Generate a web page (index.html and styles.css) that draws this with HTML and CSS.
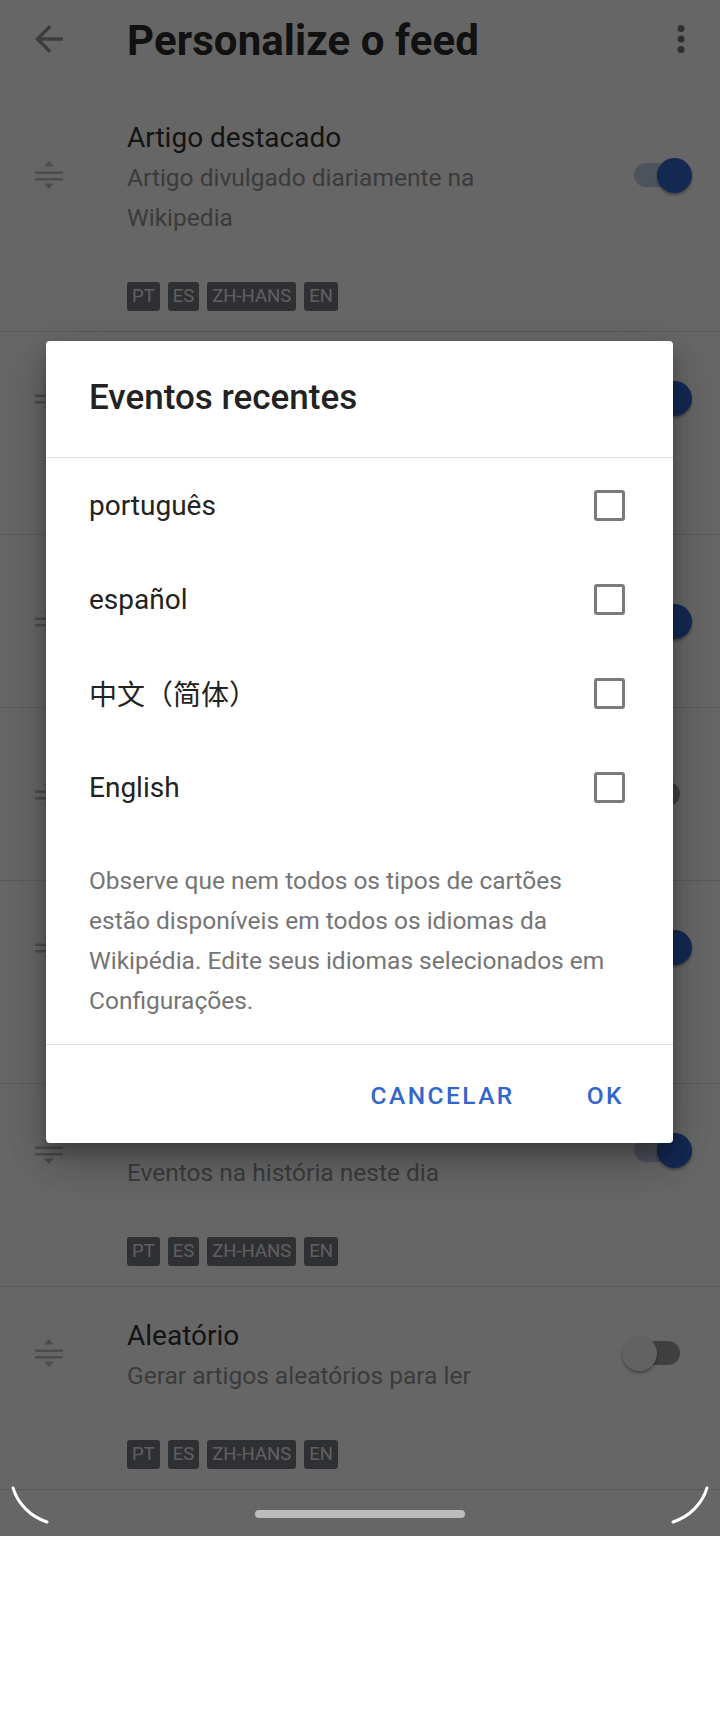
FILE: index.html
```html
<!DOCTYPE html>
<html lang="pt">
<head>
<meta charset="utf-8">
<title>Personalize o feed</title>
<link rel="stylesheet" href="styles.css">
</head>
<body>
<div class="screen">
  <header class="toolbar">
    <span class="icon-btn back" aria-label="Voltar">
      <svg viewBox="0 0 24 24"><path d="M20 11H7.83l5.59-5.59L12 4l-8 8 8 8 1.41-1.41L7.83 13H20v-2z"/></svg>
    </span>
    <h1 class="toolbar-title">Personalize o feed</h1>
    <span class="icon-btn more" aria-label="Mais opções">
      <svg viewBox="0 0 24 24"><circle cx="12" cy="6" r="2"/><circle cx="12" cy="12" r="2"/><circle cx="12" cy="18" r="2"/></svg>
    </span>
  </header>

  <ul class="feed-list">
    <li class="feed-item">
      <div class="feed-row">
        <svg class="drag" viewBox="0 0 28 28"><path d="M14 0l5 5.5H9z M0 10.5h28V13H0z M0 17h28v2.5H0z M9 22.5h10L14 28z"/></svg>
        <div class="feed-text">
          <div class="feed-title">Artigo destacado</div>
          <div class="feed-sub">Artigo divulgado diariamente na Wikipedia</div>
        </div>
        <span class="switch on"></span>
      </div>
      <div class="tags"><span class="tag">PT</span><span class="tag">ES</span><span class="tag">ZH-HANS</span><span class="tag">EN</span></div>
    </li>
    <li class="feed-item">
      <div class="feed-row">
        <svg class="drag" viewBox="0 0 28 28"><path d="M14 0l5 5.5H9z M0 10.5h28V13H0z M0 17h28v2.5H0z M9 22.5h10L14 28z"/></svg>
        <div class="feed-text">
          <div class="feed-title">Mais lidos</div>
          <div class="feed-sub">Artigos mais lidos hoje</div>
        </div>
        <span class="switch on"></span>
      </div>
      <div class="tags"><span class="tag">PT</span><span class="tag">ES</span><span class="tag">ZH-HANS</span><span class="tag">EN</span></div>
    </li>
    <li class="feed-item no-tags">
      <div class="feed-row">
        <svg class="drag" viewBox="0 0 28 28"><path d="M14 0l5 5.5H9z M0 10.5h28V13H0z M0 17h28v2.5H0z M9 22.5h10L14 28z"/></svg>
        <div class="feed-text">
          <div class="feed-title">Imagem do dia</div>
          <div class="feed-sub">Imagem divulgada diariamente no Wikimedia Commons</div>
        </div>
        <span class="switch on"></span>
      </div>
    </li>
    <li class="feed-item no-tags">
      <div class="feed-row">
        <svg class="drag" viewBox="0 0 28 28"><path d="M14 0l5 5.5H9z M0 10.5h28V13H0z M0 17h28v2.5H0z M9 22.5h10L14 28z"/></svg>
        <div class="feed-text">
          <div class="feed-title">Continuar lendo</div>
          <div class="feed-sub">Sugestões baseadas nos artigos que você leu</div>
        </div>
        <span class="switch"></span>
      </div>
    </li>
    <li class="feed-item">
      <div class="feed-row">
        <svg class="drag" viewBox="0 0 28 28"><path d="M14 0l5 5.5H9z M0 10.5h28V13H0z M0 17h28v2.5H0z M9 22.5h10L14 28z"/></svg>
        <div class="feed-text">
          <div class="feed-title">Eventos recentes</div>
          <div class="feed-sub">Artigos sobre eventos atuais</div>
        </div>
        <span class="switch on"></span>
      </div>
      <div class="tags"><span class="tag">PT</span><span class="tag">ES</span><span class="tag">ZH-HANS</span><span class="tag">EN</span></div>
    </li>
    <li class="feed-item">
      <div class="feed-row">
        <svg class="drag" viewBox="0 0 28 28"><path d="M14 0l5 5.5H9z M0 10.5h28V13H0z M0 17h28v2.5H0z M9 22.5h10L14 28z"/></svg>
        <div class="feed-text">
          <div class="feed-title">Neste dia</div>
          <div class="feed-sub">Eventos na história neste dia</div>
        </div>
        <span class="switch on"></span>
      </div>
      <div class="tags"><span class="tag">PT</span><span class="tag">ES</span><span class="tag">ZH-HANS</span><span class="tag">EN</span></div>
    </li>
    <li class="feed-item">
      <div class="feed-row">
        <svg class="drag" viewBox="0 0 28 28"><path d="M14 0l5 5.5H9z M0 10.5h28V13H0z M0 17h28v2.5H0z M9 22.5h10L14 28z"/></svg>
        <div class="feed-text">
          <div class="feed-title">Aleatório</div>
          <div class="feed-sub">Gerar artigos aleatórios para ler</div>
        </div>
        <span class="switch"></span>
      </div>
      <div class="tags"><span class="tag">PT</span><span class="tag">ES</span><span class="tag">ZH-HANS</span><span class="tag">EN</span></div>
    </li>
  </ul>

  <div class="scrim"></div>

  <div class="navbar"><span class="pill"></span></div>

  <section class="dialog" role="dialog" aria-label="Eventos recentes">
    <h2 class="dialog-title">Eventos recentes</h2>
    <ul class="options">
      <li class="option"><span>português</span><span class="checkbox"></span></li>
      <li class="option"><span>español</span><span class="checkbox"></span></li>
      <li class="option"><span class="cjk">中文（简体）</span><span class="checkbox"></span></li>
      <li class="option"><span>English</span><span class="checkbox"></span></li>
    </ul>
    <p class="note">Observe que nem todos os tipos de cartões estão disponíveis em todos os idiomas da Wikipédia. Edite seus idiomas selecionados em Configurações.</p>
    <div class="actions">
      <button class="btn">Cancelar</button>
      <button class="btn">OK</button>
    </div>
  </section>

  <svg class="corners" viewBox="0 0 720 1536" preserveAspectRatio="none">
    <path d="M13 1488 A52 52 0 0 0 47 1522"/>
    <path d="M707 1488 A52 52 0 0 1 673 1522"/>
  </svg>
</div>
</body>
</html>
```

FILE: styles.css
```css
* { box-sizing: border-box; }

html, body {
  margin: 0;
  padding: 0;
  background: #ffffff;
}

body {
  font-family: Roboto, "Noto Sans", "Liberation Sans", sans-serif;
  color: #222;
}

.screen {
  position: relative;
  width: 720px;
  height: 1536px;
  overflow: hidden;
  background: #ffffff;
}

/* Toolbar */
.toolbar {
  display: flex;
  align-items: center;
  height: 78px;
}

.icon-btn {
  display: block;
  width: 42px;
  height: 42px;
  flex: none;
}

.icon-btn svg {
  display: block;
  width: 42px;
  height: 42px;
}

.back {
  margin-left: 28px;
  fill: #9a9a9a;
}

.more {
  margin-left: auto;
  margin-right: 18px;
  fill: #767676;
}

.toolbar-title {
  margin: 3px 0 0 57px;
  font-size: 42px;
  font-weight: 700;
  line-height: 49px;
  color: #2b2b2b;
  letter-spacing: 0.1px;
}

/* Feed list */
.feed-list {
  list-style: none;
  margin: 11px 0 0;
  padding: 0;
}

.feed-item {
  padding: 31px 0 20px;
  border-bottom: 1px solid #e1e1e1;
}

.feed-item.no-tags {
  padding-bottom: 23px;
}

.feed-row {
  display: flex;
  align-items: center;
}

.drag {
  flex: none;
  width: 28px;
  height: 28px;
  margin: 0 64px 8px 35px;
  fill: #bdbdbd;
}

.feed-text {
  flex: 1;
  min-width: 0;
}

.feed-title {
  font-size: 28px;
  line-height: 36px;
  color: #333;
}

.feed-sub {
  margin-top: 2px;
  font-size: 24.5px;
  line-height: 40px;
  color: #949494;
}

.switch {
  position: relative;
  flex: none;
  width: 70px;
  height: 35px;
  margin: 0 28px 8px 70px;
}

.switch::before {
  content: "";
  position: absolute;
  left: 12px;
  right: 12px;
  top: 5.5px;
  height: 24px;
  border-radius: 12px;
  background: #9e9e9e;
}

.switch::after {
  content: "";
  position: absolute;
  left: 0;
  top: 0;
  width: 35px;
  height: 35px;
  border-radius: 50%;
  background: #f6f6f6;
  box-shadow: 0 2px 3px rgba(0, 0, 0, 0.35);
}

.switch.on::before {
  background: #c3cde6;
}

.switch.on::after {
  left: 35px;
  background: #3366cc;
}

.tags {
  display: flex;
  gap: 8px;
  margin: 44px 0 0 127px;
}

.tag {
  height: 29px;
  padding: 0 5px;
  border-radius: 3px;
  background: #76797f;
  color: #eeeeee;
  font-size: 18.5px;
  line-height: 29px;
}

/* Scrim and nav */
.scrim {
  position: absolute;
  inset: 0;
  background: rgba(0, 0, 0, 0.6);
}

.navbar {
  position: relative;
  z-index: 2;
  display: flex;
  justify-content: center;
  height: 46px;
  padding-top: 20px;
}

.pill {
  display: block;
  width: 210px;
  height: 8px;
  border-radius: 4px;
  background: #bbbbbb;
}

.corners {
  position: absolute;
  left: 0;
  top: 0;
  width: 720px;
  height: 1536px;
  z-index: 5;
  fill: none;
  stroke: #ffffff;
  stroke-width: 3;
  stroke-linecap: round;
  pointer-events: none;
}

/* Dialog */
.dialog {
  position: absolute;
  z-index: 3;
  left: 46px;
  top: 341px;
  width: 627px;
  background: #ffffff;
  border-radius: 4px;
  box-shadow: 0 24px 38px rgba(0, 0, 0, 0.14), 0 9px 46px rgba(0, 0, 0, 0.12), 0 11px 15px rgba(0, 0, 0, 0.2);
}

.dialog-title {
  margin: 0;
  padding: 36px 43px 39px;
  font-size: 35px;
  font-weight: 500;
  line-height: 41px;
  color: #222;
  border-bottom: 1px solid #e0e0e0;
}

.options {
  list-style: none;
  margin: 0;
  padding: 0;
}

.option {
  display: flex;
  align-items: center;
  justify-content: space-between;
  height: 94px;
  padding: 0 48px 0 43px;
  font-size: 28px;
  color: #222;
}

.cjk {
  font-family: Roboto, "Noto Sans CJK SC", sans-serif;
}

.checkbox {
  display: block;
  width: 31px;
  height: 31px;
  border: 3.5px solid #7a7a7a;
  border-radius: 3px;
}

.note {
  margin: 0;
  padding: 27px 50px 23px 43px;
  font-size: 24.5px;
  line-height: 40px;
  color: #757575;
  border-bottom: 1px solid #e0e0e0;
}

.actions {
  display: flex;
  justify-content: flex-end;
  gap: 72px;
  padding: 37px 49px 33px 0;
}

.btn {
  padding: 0;
  border: 0;
  background: none;
  font-family: Roboto, sans-serif;
  font-size: 24.5px;
  font-weight: 500;
  line-height: 28px;
  letter-spacing: 2.45px;
  text-transform: uppercase;
  color: #3366cc;
}
```
